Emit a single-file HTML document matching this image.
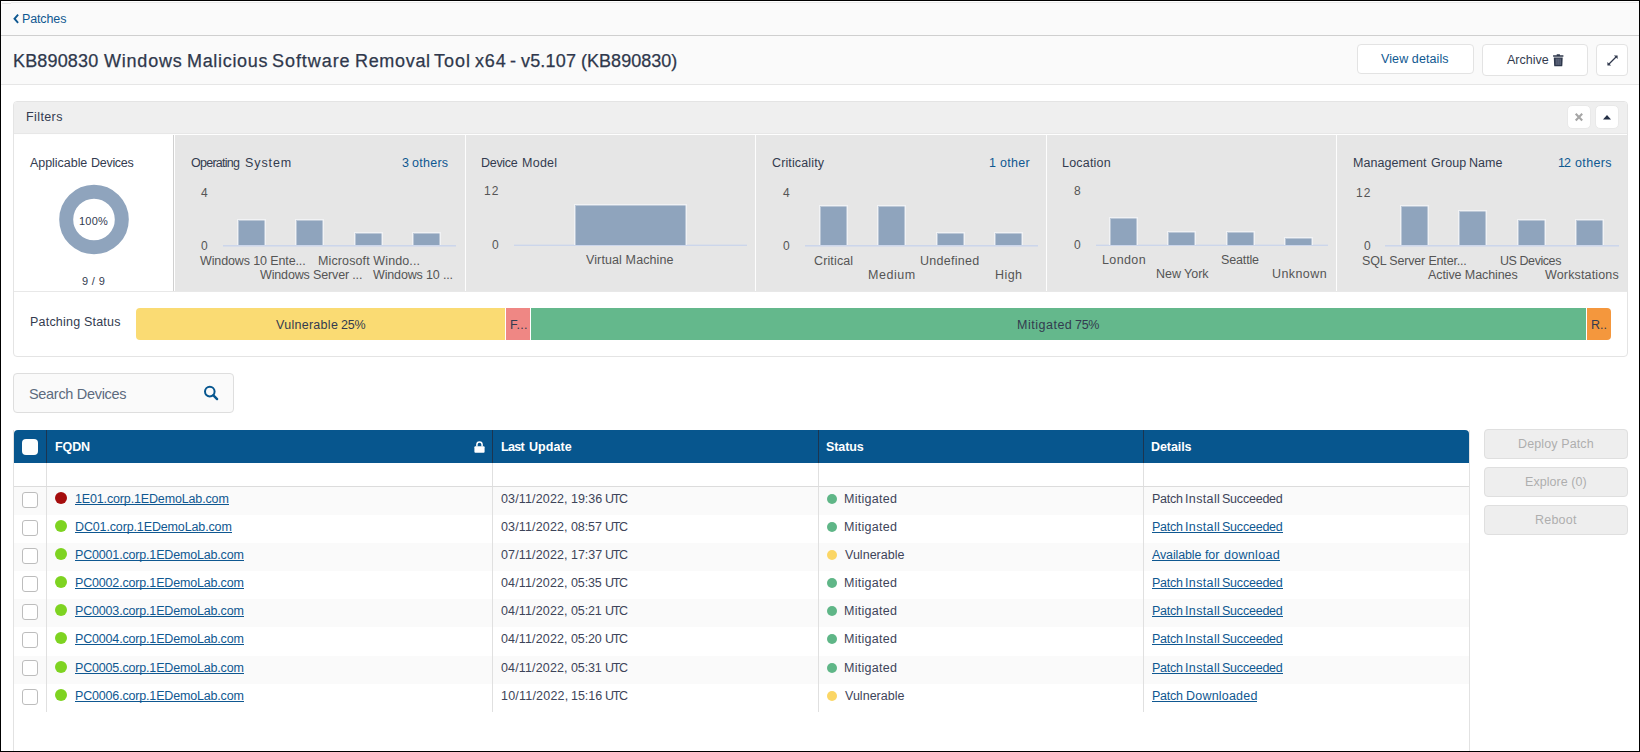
<!DOCTYPE html>
<html><head><meta charset="utf-8"><title>Patch</title>
<style>
html,body{margin:0;padding:0;}
body{width:1640px;height:752px;position:relative;overflow:hidden;background:#fff;font-family:"Liberation Sans", sans-serif;}
.r{position:absolute;display:block;}
.t{position:absolute;white-space:nowrap;line-height:20px;}
</style></head><body>
<div class="r" style="left:0px;top:0px;width:1640px;height:35px;background:#fafafa;"></div>
<div class="r" style="left:1px;top:1px;width:1638px;height:1px;background:#fff;"></div>
<div class="r" style="left:11px;top:2px;width:1628px;height:1px;background:#ececec;"></div>
<div class="r" style="left:2px;top:3px;width:9px;height:1px;background:#e6e6e6;"></div>
<div class="r" style="left:0px;top:35px;width:1640px;height:1px;background:#cfcfcf;"></div>
<div class="r" style="left:0px;top:36px;width:1640px;height:48px;background:#fafafa;"></div>
<div class="r" style="left:0px;top:84px;width:1640px;height:1px;background:#e6e6e6;"></div>
<svg class="r" style="left:12px;top:13px" width="9" height="12" viewBox="0 0 9 12"><path d="M6.1 1.7 L2.5 5.75 L6.1 9.8" fill="none" stroke="#0f5891" stroke-width="1.9"/></svg>
<span class="t" id="patches" style="left:22px;top:9px;font-size:12.5px;color:#0f5891;letter-spacing:-0.130px;">Patches</span>
<span class="t" id="title0" style="left:13px;top:51px;font-size:18px;color:#2f384c;letter-spacing:0.164px;-webkit-text-stroke:0.25px #2f384c;">KB890830</span>
<span class="t" id="title1" style="left:104px;top:51px;font-size:18px;color:#2f384c;letter-spacing:0.781px;-webkit-text-stroke:0.25px #2f384c;">Windows</span>
<span class="t" id="title2" style="left:187px;top:51px;font-size:18px;color:#2f384c;letter-spacing:0.677px;-webkit-text-stroke:0.25px #2f384c;">Malicious</span>
<span class="t" id="title3" style="left:272px;top:51px;font-size:18px;color:#2f384c;letter-spacing:0.940px;-webkit-text-stroke:0.25px #2f384c;">Software</span>
<span class="t" id="title4" style="left:355px;top:51px;font-size:18px;color:#2f384c;letter-spacing:0.674px;-webkit-text-stroke:0.25px #2f384c;">Removal</span>
<span class="t" id="title5" style="left:434px;top:51px;font-size:18px;color:#2f384c;letter-spacing:0.964px;-webkit-text-stroke:0.25px #2f384c;">Tool</span>
<span class="t" id="title6" style="left:475px;top:51px;font-size:18px;color:#2f384c;letter-spacing:0.830px;-webkit-text-stroke:0.25px #2f384c;">x64</span>
<span class="t" id="title7" style="left:510px;top:51px;font-size:18px;color:#2f384c;letter-spacing:0.000px;-webkit-text-stroke:0.25px #2f384c;">-</span>
<span class="t" id="title8" style="left:521px;top:51px;font-size:18px;color:#2f384c;letter-spacing:0.170px;-webkit-text-stroke:0.25px #2f384c;">v5.107</span>
<span class="t" id="title9" style="left:581px;top:51px;font-size:18px;color:#2f384c;letter-spacing:0.029px;-webkit-text-stroke:0.25px #2f384c;">(KB890830)</span>
<div class="r" style="left:1357px;top:44px;width:117px;height:30px;background:#fff;border:1px solid #e3e3e3;border-radius:4px;box-sizing:border-box;"></div>
<span class="t" id="viewdetails" style="left:1381px;top:49px;font-size:12.5px;color:#0f5891;letter-spacing:0.101px;">View details</span>
<div class="r" style="left:1482px;top:44px;width:106px;height:32px;background:#fff;border:1px solid #e3e3e3;border-radius:4px;box-sizing:border-box;"></div>
<span class="t" id="archive" style="left:1507px;top:50px;font-size:12.5px;color:#333b4f;letter-spacing:-0.010px;">Archive</span>
<svg class="r" style="left:1553px;top:53.5px" width="11" height="13" viewBox="0 0 11 13"><path d="M3.7 .3h3.2v1.2h-3.2z M.1 1.2h10.3v1.6H.1z M.8 3.5h8.9l-.35 7.9a.9.9 0 0 1-.9.85H2.05a.9.9 0 0 1-.9-.85z" fill="#2f384c"/><path d="M2.6 4.6h5.3v6.3H2.6z" fill="#5c657a"/><path d="M4.2 4.6v6.3M6.3 4.6v6.3" stroke="#454e63" stroke-width=".7"/></svg>
<div class="r" style="left:1596px;top:44px;width:32px;height:32px;background:#fff;border:1px solid #e3e3e3;border-radius:4px;box-sizing:border-box;"></div>
<svg class="r" style="left:1606.5px;top:54.5px" width="11" height="11" viewBox="0 0 11 11"><path d="M2 9 L9 2" stroke="#2f384c" stroke-width="1.15"/><path d="M6.9 .4h3.7v3.7z M.4 6.9v3.7h3.7z" fill="#2f384c"/></svg>
<div class="r" style="left:13px;top:101px;width:1615px;height:256px;background:#fff;border:1px solid #e4e4e4;border-radius:4px;box-sizing:border-box;"></div>
<div class="r" style="left:14px;top:102px;width:1613px;height:31px;background:#efefef;border-radius:3px 3px 0 0;"></div>
<div class="r" style="left:14px;top:133px;width:1613px;height:1px;background:#e7e7e7;"></div>
<div class="r" style="left:14px;top:134px;width:1613px;height:1px;background:#fefefe;"></div>
<span class="t" id="filters" style="left:26px;top:107px;font-size:12.5px;color:#333b4f;letter-spacing:0.396px;">Filters</span>
<div class="r" style="left:1567px;top:105px;width:24px;height:24px;background:#fff;border:1px solid #e9e9e9;border-radius:5px;box-sizing:border-box;"></div>
<svg class="r" style="left:1574px;top:112px" width="10" height="10" viewBox="0 0 10 10"><path d="M1.7 1.7 L8.2 8.4 M8.2 1.7 L1.7 8.4" stroke="#a6a6a6" stroke-width="2.1"/></svg>
<div class="r" style="left:1595px;top:105px;width:24px;height:24px;background:#fff;border:1px solid #e9e9e9;border-radius:5px;box-sizing:border-box;"></div>
<svg class="r" style="left:1602px;top:114px" width="10" height="6" viewBox="0 0 10 6"><path d="M1 5.4 L5 1 L9 5.4z" fill="#232f45"/></svg>
<div class="r" style="left:175px;top:135px;width:1452px;height:156px;background:#e6e6e6;"></div>
<div class="r" style="left:14px;top:291px;width:1613px;height:1px;background:#e8e8e8;"></div>
<div class="r" style="left:173px;top:135px;width:1px;height:156px;background:#d0d0d0;"></div>
<div class="r" style="left:465px;top:135px;width:1px;height:156px;background:#fdfdfd;"></div>
<div class="r" style="left:755px;top:135px;width:1px;height:156px;background:#fdfdfd;"></div>
<div class="r" style="left:1046px;top:135px;width:1px;height:156px;background:#fdfdfd;"></div>
<div class="r" style="left:1336px;top:135px;width:1px;height:156px;background:#fdfdfd;"></div>
<span class="t" id="appdev_0" style="left:30px;top:153px;font-size:12.5px;color:#333b4f;letter-spacing:-0.040px;">Applicable</span>
<span class="t" id="appdev_1" style="left:91px;top:153px;font-size:12.5px;color:#333b4f;letter-spacing:-0.283px;">Devices</span>
<svg class="r" style="left:59px;top:184px" width="70" height="72" viewBox="0 0 70 72"><circle cx="35" cy="35.5" r="27.8" fill="none" stroke="#8fa4bd" stroke-width="14"/></svg>
<span class="t" id="pct100" style="left:79px;top:211px;font-size:11px;color:#333b4f;letter-spacing:0.248px;">100%</span>
<span class="t" id="nine" style="left:82px;top:271px;font-size:11px;color:#333b4f;letter-spacing:0.336px;">9 / 9</span>
<span class="t" id="os_t_0" style="left:191px;top:153px;font-size:12.5px;color:#333b4f;letter-spacing:-0.741px;">Operating</span>
<span class="t" id="os_t_1" style="left:245px;top:153px;font-size:12.5px;color:#333b4f;letter-spacing:0.913px;">System</span>
<span class="t" id="os_o_0" style="left:402px;top:153px;font-size:12.5px;color:#0f5891;letter-spacing:0.000px;">3</span>
<span class="t" id="os_o_1" style="left:412px;top:153px;font-size:12.5px;color:#0f5891;letter-spacing:0.262px;">others</span>
<span class="t" id="os_ymax" style="left:201px;top:183px;font-size:12px;color:#555;letter-spacing:0.000px;">4</span>
<span class="t" id="os_y0" style="left:201px;top:236px;font-size:12px;color:#555;letter-spacing:0.000px;">0</span>
<div class="r" style="left:223px;top:245px;width:233px;height:1px;background:#ccd6eb;"></div>
<div class="r" style="left:223px;top:246px;width:233px;height:1px;background:rgba(204,214,235,.55);"></div>
<div class="r" style="left:237px;top:219px;width:29px;height:26px;background:#8fa4bd;border:1px solid #f1f2f4;border-bottom:none;box-sizing:border-box;background-clip:padding-box;box-shadow:inset 1px 1px 0 rgba(241,242,244,.45),inset -1px 0 0 rgba(241,242,244,.45);"></div>
<div class="r" style="left:295px;top:219px;width:29px;height:26px;background:#8fa4bd;border:1px solid #f1f2f4;border-bottom:none;box-sizing:border-box;background-clip:padding-box;box-shadow:inset 1px 1px 0 rgba(241,242,244,.45),inset -1px 0 0 rgba(241,242,244,.45);"></div>
<div class="r" style="left:354px;top:232px;width:29px;height:13px;background:#8fa4bd;border:1px solid #f1f2f4;border-bottom:none;box-sizing:border-box;background-clip:padding-box;box-shadow:inset 1px 1px 0 rgba(241,242,244,.45),inset -1px 0 0 rgba(241,242,244,.45);"></div>
<div class="r" style="left:412px;top:232px;width:29px;height:13px;background:#8fa4bd;border:1px solid #f1f2f4;border-bottom:none;box-sizing:border-box;background-clip:padding-box;box-shadow:inset 1px 1px 0 rgba(241,242,244,.45),inset -1px 0 0 rgba(241,242,244,.45);"></div>
<span class="t" id="os_l0" style="left:200px;top:251px;font-size:12.5px;color:#555;letter-spacing:-0.120px;">Windows 10 Ente...</span>
<span class="t" id="os_l1" style="left:318px;top:251px;font-size:12.5px;color:#555;letter-spacing:0.116px;">Microsoft Windo...</span>
<span class="t" id="os_l2" style="left:260px;top:265px;font-size:12.5px;color:#555;letter-spacing:-0.145px;">Windows Server ...</span>
<span class="t" id="os_l3" style="left:373px;top:265px;font-size:12.5px;color:#555;letter-spacing:-0.148px;">Windows 10 ...</span>
<span class="t" id="dm_t_0" style="left:481px;top:153px;font-size:12.5px;color:#333b4f;letter-spacing:-0.288px;">Device</span>
<span class="t" id="dm_t_1" style="left:522px;top:153px;font-size:12.5px;color:#333b4f;letter-spacing:0.267px;">Model</span>
<span class="t" id="dm_ymax" style="left:484px;top:181px;font-size:12px;color:#555;letter-spacing:1.062px;">12</span>
<span class="t" id="dm_y0" style="left:492px;top:235px;font-size:12px;color:#555;letter-spacing:0.000px;">0</span>
<div class="r" style="left:514px;top:245px;width:232.5px;height:1px;background:#ccd6eb;"></div>
<div class="r" style="left:514px;top:244px;width:232.5px;height:1px;background:rgba(204,214,235,.4);"></div>
<div class="r" style="left:574px;top:204px;width:113px;height:41px;background:#8fa4bd;border:1px solid #f1f2f4;border-bottom:none;box-sizing:border-box;background-clip:padding-box;box-shadow:inset 1px 1px 0 rgba(241,242,244,.45),inset -1px 0 0 rgba(241,242,244,.45);"></div>
<span class="t" id="dm_l0" style="left:586px;top:250px;font-size:12.5px;color:#555;letter-spacing:0.115px;">Virtual Machine</span>
<span class="t" id="cr_t" style="left:772px;top:153px;font-size:12.5px;color:#333b4f;letter-spacing:0.130px;">Criticality</span>
<span class="t" id="cr_o" style="left:989px;top:153px;font-size:12.5px;color:#0f5891;letter-spacing:0.281px;">1 other</span>
<span class="t" id="cr_ymax" style="left:783px;top:183px;font-size:12px;color:#555;letter-spacing:0.000px;">4</span>
<span class="t" id="cr_y0" style="left:783px;top:236px;font-size:12px;color:#555;letter-spacing:0.000px;">0</span>
<div class="r" style="left:804.5px;top:245px;width:233.5px;height:1px;background:#ccd6eb;"></div>
<div class="r" style="left:804.5px;top:246px;width:233.5px;height:1px;background:rgba(204,214,235,.55);"></div>
<div class="r" style="left:819px;top:205px;width:29px;height:40px;background:#8fa4bd;border:1px solid #f1f2f4;border-bottom:none;box-sizing:border-box;background-clip:padding-box;box-shadow:inset 1px 1px 0 rgba(241,242,244,.45),inset -1px 0 0 rgba(241,242,244,.45);"></div>
<div class="r" style="left:877px;top:205px;width:29px;height:40px;background:#8fa4bd;border:1px solid #f1f2f4;border-bottom:none;box-sizing:border-box;background-clip:padding-box;box-shadow:inset 1px 1px 0 rgba(241,242,244,.45),inset -1px 0 0 rgba(241,242,244,.45);"></div>
<div class="r" style="left:936px;top:232px;width:29px;height:13px;background:#8fa4bd;border:1px solid #f1f2f4;border-bottom:none;box-sizing:border-box;background-clip:padding-box;box-shadow:inset 1px 1px 0 rgba(241,242,244,.45),inset -1px 0 0 rgba(241,242,244,.45);"></div>
<div class="r" style="left:994px;top:232px;width:29px;height:13px;background:#8fa4bd;border:1px solid #f1f2f4;border-bottom:none;box-sizing:border-box;background-clip:padding-box;box-shadow:inset 1px 1px 0 rgba(241,242,244,.45),inset -1px 0 0 rgba(241,242,244,.45);"></div>
<span class="t" id="cr_l0" style="left:814px;top:251px;font-size:12.5px;color:#555;letter-spacing:0.136px;">Critical</span>
<span class="t" id="cr_l1" style="left:920px;top:251px;font-size:12.5px;color:#555;letter-spacing:0.277px;">Undefined</span>
<span class="t" id="cr_l2" style="left:868px;top:265px;font-size:12.5px;color:#555;letter-spacing:0.536px;">Medium</span>
<span class="t" id="cr_l3" style="left:995px;top:265px;font-size:12.5px;color:#555;letter-spacing:0.433px;">High</span>
<span class="t" id="lo_t" style="left:1062px;top:153px;font-size:12.5px;color:#333b4f;letter-spacing:0.196px;">Location</span>
<span class="t" id="lo_ymax" style="left:1074px;top:181px;font-size:12px;color:#555;letter-spacing:0.000px;">8</span>
<span class="t" id="lo_y0" style="left:1074px;top:235px;font-size:12px;color:#555;letter-spacing:0.000px;">0</span>
<div class="r" style="left:1095.5px;top:245px;width:232.0px;height:1px;background:#ccd6eb;"></div>
<div class="r" style="left:1095.5px;top:244px;width:232.0px;height:1px;background:rgba(204,214,235,.4);"></div>
<div class="r" style="left:1109px;top:217px;width:29px;height:28px;background:#8fa4bd;border:1px solid #f1f2f4;border-bottom:none;box-sizing:border-box;background-clip:padding-box;box-shadow:inset 1px 1px 0 rgba(241,242,244,.45),inset -1px 0 0 rgba(241,242,244,.45);"></div>
<div class="r" style="left:1167px;top:231px;width:29px;height:14px;background:#8fa4bd;border:1px solid #f1f2f4;border-bottom:none;box-sizing:border-box;background-clip:padding-box;box-shadow:inset 1px 1px 0 rgba(241,242,244,.45),inset -1px 0 0 rgba(241,242,244,.45);"></div>
<div class="r" style="left:1226px;top:231px;width:29px;height:14px;background:#8fa4bd;border:1px solid #f1f2f4;border-bottom:none;box-sizing:border-box;background-clip:padding-box;box-shadow:inset 1px 1px 0 rgba(241,242,244,.45),inset -1px 0 0 rgba(241,242,244,.45);"></div>
<div class="r" style="left:1284px;top:237px;width:29px;height:8px;background:#8fa4bd;border:1px solid #f1f2f4;border-bottom:none;box-sizing:border-box;background-clip:padding-box;box-shadow:inset 1px 1px 0 rgba(241,242,244,.45),inset -1px 0 0 rgba(241,242,244,.45);"></div>
<span class="t" id="lo_l0" style="left:1102px;top:250px;font-size:12.5px;color:#555;letter-spacing:0.384px;">London</span>
<span class="t" id="lo_l1" style="left:1221px;top:250px;font-size:12.5px;color:#555;letter-spacing:-0.147px;">Seattle</span>
<span class="t" id="lo_l2" style="left:1156px;top:264px;font-size:12.5px;color:#555;letter-spacing:-0.038px;">New York</span>
<span class="t" id="lo_l3" style="left:1272px;top:264px;font-size:12.5px;color:#555;letter-spacing:0.418px;">Unknown</span>
<span class="t" id="mg_t_0" style="left:1353px;top:153px;font-size:12.5px;color:#333b4f;letter-spacing:0.068px;">Management</span>
<span class="t" id="mg_t_1" style="left:1431px;top:153px;font-size:12.5px;color:#333b4f;letter-spacing:0.120px;">Group</span>
<span class="t" id="mg_t_2" style="left:1469px;top:153px;font-size:12.5px;color:#333b4f;letter-spacing:0.052px;">Name</span>
<span class="t" id="mg_o_0" style="left:1558px;top:153px;font-size:12.5px;color:#0f5891;letter-spacing:-0.828px;">12</span>
<span class="t" id="mg_o_1" style="left:1575px;top:153px;font-size:12.5px;color:#0f5891;letter-spacing:0.360px;">others</span>
<span class="t" id="mg_ymax" style="left:1356px;top:183px;font-size:12px;color:#555;letter-spacing:1.062px;">12</span>
<span class="t" id="mg_y0" style="left:1364px;top:236px;font-size:12px;color:#555;letter-spacing:0.000px;">0</span>
<div class="r" style="left:1385px;top:245px;width:234px;height:1px;background:#ccd6eb;"></div>
<div class="r" style="left:1385px;top:246px;width:234px;height:1px;background:rgba(204,214,235,.55);"></div>
<div class="r" style="left:1400px;top:205px;width:29px;height:40px;background:#8fa4bd;border:1px solid #f1f2f4;border-bottom:none;box-sizing:border-box;background-clip:padding-box;box-shadow:inset 1px 1px 0 rgba(241,242,244,.45),inset -1px 0 0 rgba(241,242,244,.45);"></div>
<div class="r" style="left:1458px;top:210px;width:29px;height:35px;background:#8fa4bd;border:1px solid #f1f2f4;border-bottom:none;box-sizing:border-box;background-clip:padding-box;box-shadow:inset 1px 1px 0 rgba(241,242,244,.45),inset -1px 0 0 rgba(241,242,244,.45);"></div>
<div class="r" style="left:1517px;top:219px;width:29px;height:26px;background:#8fa4bd;border:1px solid #f1f2f4;border-bottom:none;box-sizing:border-box;background-clip:padding-box;box-shadow:inset 1px 1px 0 rgba(241,242,244,.45),inset -1px 0 0 rgba(241,242,244,.45);"></div>
<div class="r" style="left:1575px;top:219px;width:29px;height:26px;background:#8fa4bd;border:1px solid #f1f2f4;border-bottom:none;box-sizing:border-box;background-clip:padding-box;box-shadow:inset 1px 1px 0 rgba(241,242,244,.45),inset -1px 0 0 rgba(241,242,244,.45);"></div>
<span class="t" id="mg_l0" style="left:1362px;top:251px;font-size:12.5px;color:#555;letter-spacing:-0.174px;">SQL Server Enter...</span>
<span class="t" id="mg_l1" style="left:1500px;top:251px;font-size:12.5px;color:#555;letter-spacing:-0.435px;">US Devices</span>
<span class="t" id="mg_l2" style="left:1428px;top:265px;font-size:12.5px;color:#555;letter-spacing:-0.098px;">Active Machines</span>
<span class="t" id="mg_l3" style="left:1545px;top:265px;font-size:12.5px;color:#555;letter-spacing:0.149px;">Workstations</span>
<span class="t" id="patching" style="left:30px;top:312px;font-size:12.5px;color:#333b4f;letter-spacing:0.205px;">Patching Status</span>
<div class="r" style="left:136px;top:308px;width:369px;height:32px;background:#fadb73;border-radius:4px 0 0 4px;"></div>
<div class="r" style="left:506px;top:308px;width:24px;height:32px;background:#ef8784;"></div>
<div class="r" style="left:531px;top:308px;width:1055px;height:32px;background:#64b88c;"></div>
<div class="r" style="left:1587px;top:308px;width:24px;height:32px;background:#f4973d;border-radius:0 4px 4px 0;"></div>
<span class="t" id="vuln25_0" style="left:276px;top:315px;font-size:12.5px;color:#333b4f;letter-spacing:0.282px;">Vulnerable</span>
<span class="t" id="vuln25_1" style="left:341px;top:315px;font-size:12.5px;color:#333b4f;letter-spacing:-0.244px;">25%</span>
<span class="t" id="fdots" style="left:510px;top:315px;font-size:12.5px;color:#333b4f;letter-spacing:0.257px;">F...</span>
<span class="t" id="mit75_0" style="left:1017px;top:315px;font-size:12.5px;color:#333b4f;letter-spacing:0.512px;">Mitigated</span>
<span class="t" id="mit75_1" style="left:1075px;top:315px;font-size:12.5px;color:#333b4f;letter-spacing:-0.280px;">75%</span>
<span class="t" id="rdots" style="left:1591px;top:315px;font-size:12.5px;color:#333b4f;letter-spacing:0.000px;">R..</span>
<div class="r" style="left:13px;top:373px;width:221px;height:40px;background:#fafafa;border:1px solid #dedede;border-radius:4px;box-sizing:border-box;"></div>
<span class="t" id="search" style="left:29px;top:384px;font-size:14.5px;color:#5d6b7e;letter-spacing:-0.313px;">Search Devices</span>
<svg class="r" style="left:203px;top:385px" width="16" height="16" viewBox="0 0 16 16"><circle cx="6.8" cy="6.6" r="4.8" fill="none" stroke="#06568f" stroke-width="2"/><path d="M10.4 10.3 L14.1 14.1" stroke="#06568f" stroke-width="2.4" stroke-linecap="round"/></svg>
<div class="r" style="left:13px;top:430px;width:1px;height:321px;background:#e2e2e2;"></div>
<div class="r" style="left:1469px;top:430px;width:1px;height:321px;background:#e2e2e2;"></div>
<div class="r" style="left:14px;top:430px;width:1455px;height:33px;background:#07568e;border-radius:4px 4px 0 0;"></div>
<div class="r" style="left:46px;top:430px;width:1px;height:33px;background:#1c3550;"></div>
<div class="r" style="left:46px;top:463px;width:1px;height:249px;background:#e0e0e0;"></div>
<div class="r" style="left:492px;top:430px;width:1px;height:33px;background:#1c3550;"></div>
<div class="r" style="left:492px;top:463px;width:1px;height:249px;background:#e0e0e0;"></div>
<div class="r" style="left:818px;top:430px;width:1px;height:33px;background:#1c3550;"></div>
<div class="r" style="left:818px;top:463px;width:1px;height:249px;background:#e0e0e0;"></div>
<div class="r" style="left:1143px;top:430px;width:1px;height:33px;background:#1c3550;"></div>
<div class="r" style="left:1143px;top:463px;width:1px;height:249px;background:#e0e0e0;"></div>
<div class="r" style="left:22px;top:439px;width:16px;height:16px;background:#fefefd;border-radius:4px;"></div>
<span class="t" id="fqdn" style="left:55px;top:437px;font-size:12.5px;color:#fff;letter-spacing:-0.114px;font-weight:700;">FQDN</span>
<span class="t" id="lastupdate_0" style="left:501px;top:437px;font-size:12.5px;color:#fff;letter-spacing:-0.656px;font-weight:700;">Last</span>
<span class="t" id="lastupdate_1" style="left:529px;top:437px;font-size:12.5px;color:#fff;letter-spacing:0.050px;font-weight:700;">Update</span>
<span class="t" id="status" style="left:826px;top:437px;font-size:12.5px;color:#fff;letter-spacing:-0.102px;font-weight:700;">Status</span>
<span class="t" id="details" style="left:1151px;top:437px;font-size:12.5px;color:#fff;letter-spacing:-0.078px;font-weight:700;">Details</span>
<svg class="r" style="left:474px;top:441px" width="11" height="12" viewBox="0 0 11 12"><path d="M2.9 5.4V3.6a2.6 2.6 0 0 1 5.2 0v1.8" fill="none" stroke="#fff" stroke-width="1.5"/><rect x=".4" y="5.2" width="10.2" height="6.6" rx="1" fill="#fff"/></svg>
<div class="r" style="left:14px;top:486px;width:1455px;height:1px;background:#dcdcdc;"></div>
<div class="r" style="left:14px;top:487px;width:32px;height:28px;background:#fafafa;"></div>
<div class="r" style="left:47px;top:487px;width:445px;height:28px;background:#fafafa;"></div>
<div class="r" style="left:493px;top:487px;width:325px;height:28px;background:#fafafa;"></div>
<div class="r" style="left:819px;top:487px;width:324px;height:28px;background:#fafafa;"></div>
<div class="r" style="left:1144px;top:487px;width:325px;height:28px;background:#fafafa;"></div>
<div class="r" style="left:22px;top:492px;width:16px;height:16px;background:#fff;border:1px solid #bdbdbd;border-radius:3px;box-sizing:border-box;"></div>
<div class="r" style="left:55px;top:492px;width:12px;height:12px;background:#a50d0d;border-radius:50%;"></div>
<span class="t" id="fq0_0" style="left:75px;top:489px;font-size:12.5px;color:#0f5891;letter-spacing:-0.146px;">1E01.corp.1EDemoLab.com</span>
<div class="r" style="left:75px;top:504px;width:154px;height:1px;background:#0f5891;"></div>
<span class="t" id="dta0" style="left:501px;top:489px;font-size:12.5px;color:#3d4459;letter-spacing:0.148px;">03/11/2022,</span>
<span class="t" id="dtb0" style="left:571px;top:489px;font-size:12.5px;color:#3d4459;letter-spacing:-0.033px;">19:36</span>
<span class="t" id="dtc0" style="left:605px;top:489px;font-size:12.5px;color:#3d4459;letter-spacing:-1.332px;">UTC</span>
<div class="r" style="left:827px;top:494.0px;width:10px;height:10px;background:#5fb687;border-radius:50%;"></div>
<span class="t" id="st0" style="left:844px;top:489px;font-size:12.5px;color:#3d4459;letter-spacing:0.280px;">Mitigated</span>
<span class="t" id="de0_0" style="left:1152px;top:489px;font-size:12.5px;color:#3d4459;letter-spacing:-0.238px;">Patch</span>
<span class="t" id="de0_1" style="left:1185px;top:489px;font-size:12.5px;color:#3d4459;letter-spacing:0.368px;">Install</span>
<span class="t" id="de0_2" style="left:1222px;top:489px;font-size:12.5px;color:#3d4459;letter-spacing:-0.219px;">Succeeded</span>
<div class="r" style="left:22px;top:520px;width:16px;height:16px;background:#fff;border:1px solid #bdbdbd;border-radius:3px;box-sizing:border-box;"></div>
<div class="r" style="left:55px;top:520px;width:12px;height:12px;background:#7ed321;border-radius:50%;"></div>
<span class="t" id="fq1_0" style="left:75px;top:517px;font-size:12.5px;color:#0f5891;letter-spacing:-0.136px;">DC01.corp.1EDemoLab.com</span>
<div class="r" style="left:75px;top:532px;width:157px;height:1px;background:#0f5891;"></div>
<span class="t" id="dta1" style="left:501px;top:517px;font-size:12.5px;color:#3d4459;letter-spacing:0.148px;">03/11/2022,</span>
<span class="t" id="dtb1" style="left:571px;top:517px;font-size:12.5px;color:#3d4459;letter-spacing:-0.095px;">08:57</span>
<span class="t" id="dtc1" style="left:605px;top:517px;font-size:12.5px;color:#3d4459;letter-spacing:-1.332px;">UTC</span>
<div class="r" style="left:827px;top:522.0px;width:10px;height:10px;background:#5fb687;border-radius:50%;"></div>
<span class="t" id="st1" style="left:844px;top:517px;font-size:12.5px;color:#3d4459;letter-spacing:0.280px;">Mitigated</span>
<span class="t" id="de1_0" style="left:1152px;top:517px;font-size:12.5px;color:#0f5891;letter-spacing:-0.238px;">Patch</span>
<span class="t" id="de1_1" style="left:1185px;top:517px;font-size:12.5px;color:#0f5891;letter-spacing:0.368px;">Install</span>
<span class="t" id="de1_2" style="left:1222px;top:517px;font-size:12.5px;color:#0f5891;letter-spacing:-0.219px;">Succeeded</span>
<div class="r" style="left:1152px;top:532px;width:131px;height:1px;background:#0f5891;"></div>
<div class="r" style="left:14px;top:543px;width:32px;height:28px;background:#fafafa;"></div>
<div class="r" style="left:47px;top:543px;width:445px;height:28px;background:#fafafa;"></div>
<div class="r" style="left:493px;top:543px;width:325px;height:28px;background:#fafafa;"></div>
<div class="r" style="left:819px;top:543px;width:324px;height:28px;background:#fafafa;"></div>
<div class="r" style="left:1144px;top:543px;width:325px;height:28px;background:#fafafa;"></div>
<div class="r" style="left:22px;top:548px;width:16px;height:16px;background:#fff;border:1px solid #bdbdbd;border-radius:3px;box-sizing:border-box;"></div>
<div class="r" style="left:55px;top:548px;width:12px;height:12px;background:#7ed321;border-radius:50%;"></div>
<span class="t" id="fq2_0" style="left:75px;top:545px;font-size:12.5px;color:#0f5891;letter-spacing:-0.172px;">PC0001.corp.1EDemoLab.com</span>
<div class="r" style="left:75px;top:560px;width:169px;height:1px;background:#0f5891;"></div>
<span class="t" id="dta2" style="left:501px;top:545px;font-size:12.5px;color:#3d4459;letter-spacing:0.148px;">07/11/2022,</span>
<span class="t" id="dtb2" style="left:571px;top:545px;font-size:12.5px;color:#3d4459;letter-spacing:-0.045px;">17:37</span>
<span class="t" id="dtc2" style="left:605px;top:545px;font-size:12.5px;color:#3d4459;letter-spacing:-1.332px;">UTC</span>
<div class="r" style="left:827px;top:550.0px;width:10px;height:10px;background:#fbd665;border-radius:50%;"></div>
<span class="t" id="st2" style="left:845px;top:545px;font-size:12.5px;color:#3d4459;letter-spacing:0.018px;">Vulnerable</span>
<span class="t" id="de2_0" style="left:1152px;top:545px;font-size:12.5px;color:#0f5891;letter-spacing:-0.131px;">Available</span>
<span class="t" id="de2_1" style="left:1205px;top:545px;font-size:12.5px;color:#0f5891;letter-spacing:-0.118px;">for</span>
<span class="t" id="de2_2" style="left:1224px;top:545px;font-size:12.5px;color:#0f5891;letter-spacing:0.301px;">download</span>
<div class="r" style="left:1152px;top:560px;width:128px;height:1px;background:#0f5891;"></div>
<div class="r" style="left:22px;top:576px;width:16px;height:16px;background:#fff;border:1px solid #bdbdbd;border-radius:3px;box-sizing:border-box;"></div>
<div class="r" style="left:55px;top:576px;width:12px;height:12px;background:#7ed321;border-radius:50%;"></div>
<span class="t" id="fq3_0" style="left:75px;top:573px;font-size:12.5px;color:#0f5891;letter-spacing:-0.172px;">PC0002.corp.1EDemoLab.com</span>
<div class="r" style="left:75px;top:588px;width:169px;height:1px;background:#0f5891;"></div>
<span class="t" id="dta3" style="left:501px;top:573px;font-size:12.5px;color:#3d4459;letter-spacing:0.148px;">04/11/2022,</span>
<span class="t" id="dtb3" style="left:571px;top:573px;font-size:12.5px;color:#3d4459;letter-spacing:-0.116px;">05:35</span>
<span class="t" id="dtc3" style="left:605px;top:573px;font-size:12.5px;color:#3d4459;letter-spacing:-1.332px;">UTC</span>
<div class="r" style="left:827px;top:578.0px;width:10px;height:10px;background:#5fb687;border-radius:50%;"></div>
<span class="t" id="st3" style="left:844px;top:573px;font-size:12.5px;color:#3d4459;letter-spacing:0.280px;">Mitigated</span>
<span class="t" id="de3_0" style="left:1152px;top:573px;font-size:12.5px;color:#0f5891;letter-spacing:-0.238px;">Patch</span>
<span class="t" id="de3_1" style="left:1185px;top:573px;font-size:12.5px;color:#0f5891;letter-spacing:0.368px;">Install</span>
<span class="t" id="de3_2" style="left:1222px;top:573px;font-size:12.5px;color:#0f5891;letter-spacing:-0.219px;">Succeeded</span>
<div class="r" style="left:1152px;top:588px;width:131px;height:1px;background:#0f5891;"></div>
<div class="r" style="left:14px;top:599px;width:32px;height:28px;background:#fafafa;"></div>
<div class="r" style="left:47px;top:599px;width:445px;height:28px;background:#fafafa;"></div>
<div class="r" style="left:493px;top:599px;width:325px;height:28px;background:#fafafa;"></div>
<div class="r" style="left:819px;top:599px;width:324px;height:28px;background:#fafafa;"></div>
<div class="r" style="left:1144px;top:599px;width:325px;height:28px;background:#fafafa;"></div>
<div class="r" style="left:22px;top:604px;width:16px;height:16px;background:#fff;border:1px solid #bdbdbd;border-radius:3px;box-sizing:border-box;"></div>
<div class="r" style="left:55px;top:604px;width:12px;height:12px;background:#7ed321;border-radius:50%;"></div>
<span class="t" id="fq4_0" style="left:75px;top:601px;font-size:12.5px;color:#0f5891;letter-spacing:-0.172px;">PC0003.corp.1EDemoLab.com</span>
<div class="r" style="left:75px;top:616px;width:169px;height:1px;background:#0f5891;"></div>
<span class="t" id="dta4" style="left:501px;top:601px;font-size:12.5px;color:#3d4459;letter-spacing:0.148px;">04/11/2022,</span>
<span class="t" id="dtb4" style="left:571px;top:601px;font-size:12.5px;color:#3d4459;letter-spacing:-0.119px;">05:21</span>
<span class="t" id="dtc4" style="left:605px;top:601px;font-size:12.5px;color:#3d4459;letter-spacing:-1.332px;">UTC</span>
<div class="r" style="left:827px;top:606.0px;width:10px;height:10px;background:#5fb687;border-radius:50%;"></div>
<span class="t" id="st4" style="left:844px;top:601px;font-size:12.5px;color:#3d4459;letter-spacing:0.280px;">Mitigated</span>
<span class="t" id="de4_0" style="left:1152px;top:601px;font-size:12.5px;color:#0f5891;letter-spacing:-0.238px;">Patch</span>
<span class="t" id="de4_1" style="left:1185px;top:601px;font-size:12.5px;color:#0f5891;letter-spacing:0.368px;">Install</span>
<span class="t" id="de4_2" style="left:1222px;top:601px;font-size:12.5px;color:#0f5891;letter-spacing:-0.219px;">Succeeded</span>
<div class="r" style="left:1152px;top:616px;width:131px;height:1px;background:#0f5891;"></div>
<div class="r" style="left:22px;top:632px;width:16px;height:16px;background:#fff;border:1px solid #bdbdbd;border-radius:3px;box-sizing:border-box;"></div>
<div class="r" style="left:55px;top:632px;width:12px;height:12px;background:#7ed321;border-radius:50%;"></div>
<span class="t" id="fq5_0" style="left:75px;top:629px;font-size:12.5px;color:#0f5891;letter-spacing:-0.172px;">PC0004.corp.1EDemoLab.com</span>
<div class="r" style="left:75px;top:644px;width:169px;height:1px;background:#0f5891;"></div>
<span class="t" id="dta5" style="left:501px;top:629px;font-size:12.5px;color:#3d4459;letter-spacing:0.148px;">04/11/2022,</span>
<span class="t" id="dtb5" style="left:571px;top:629px;font-size:12.5px;color:#3d4459;letter-spacing:-0.131px;">05:20</span>
<span class="t" id="dtc5" style="left:605px;top:629px;font-size:12.5px;color:#3d4459;letter-spacing:-1.332px;">UTC</span>
<div class="r" style="left:827px;top:634.0px;width:10px;height:10px;background:#5fb687;border-radius:50%;"></div>
<span class="t" id="st5" style="left:844px;top:629px;font-size:12.5px;color:#3d4459;letter-spacing:0.280px;">Mitigated</span>
<span class="t" id="de5_0" style="left:1152px;top:629px;font-size:12.5px;color:#0f5891;letter-spacing:-0.238px;">Patch</span>
<span class="t" id="de5_1" style="left:1185px;top:629px;font-size:12.5px;color:#0f5891;letter-spacing:0.368px;">Install</span>
<span class="t" id="de5_2" style="left:1222px;top:629px;font-size:12.5px;color:#0f5891;letter-spacing:-0.219px;">Succeeded</span>
<div class="r" style="left:1152px;top:644px;width:131px;height:1px;background:#0f5891;"></div>
<div class="r" style="left:14px;top:656px;width:32px;height:28px;background:#fafafa;"></div>
<div class="r" style="left:47px;top:656px;width:445px;height:28px;background:#fafafa;"></div>
<div class="r" style="left:493px;top:656px;width:325px;height:28px;background:#fafafa;"></div>
<div class="r" style="left:819px;top:656px;width:324px;height:28px;background:#fafafa;"></div>
<div class="r" style="left:1144px;top:656px;width:325px;height:28px;background:#fafafa;"></div>
<div class="r" style="left:22px;top:660px;width:16px;height:16px;background:#fff;border:1px solid #bdbdbd;border-radius:3px;box-sizing:border-box;"></div>
<div class="r" style="left:55px;top:661px;width:12px;height:12px;background:#7ed321;border-radius:50%;"></div>
<span class="t" id="fq6_0" style="left:75px;top:658px;font-size:12.5px;color:#0f5891;letter-spacing:-0.172px;">PC0005.corp.1EDemoLab.com</span>
<div class="r" style="left:75px;top:673px;width:169px;height:1px;background:#0f5891;"></div>
<span class="t" id="dta6" style="left:501px;top:658px;font-size:12.5px;color:#3d4459;letter-spacing:0.148px;">04/11/2022,</span>
<span class="t" id="dtb6" style="left:571px;top:658px;font-size:12.5px;color:#3d4459;letter-spacing:-0.119px;">05:31</span>
<span class="t" id="dtc6" style="left:605px;top:658px;font-size:12.5px;color:#3d4459;letter-spacing:-1.332px;">UTC</span>
<div class="r" style="left:827px;top:663.0px;width:10px;height:10px;background:#5fb687;border-radius:50%;"></div>
<span class="t" id="st6" style="left:844px;top:658px;font-size:12.5px;color:#3d4459;letter-spacing:0.280px;">Mitigated</span>
<span class="t" id="de6_0" style="left:1152px;top:658px;font-size:12.5px;color:#0f5891;letter-spacing:-0.238px;">Patch</span>
<span class="t" id="de6_1" style="left:1185px;top:658px;font-size:12.5px;color:#0f5891;letter-spacing:0.368px;">Install</span>
<span class="t" id="de6_2" style="left:1222px;top:658px;font-size:12.5px;color:#0f5891;letter-spacing:-0.219px;">Succeeded</span>
<div class="r" style="left:1152px;top:673px;width:131px;height:1px;background:#0f5891;"></div>
<div class="r" style="left:22px;top:689px;width:16px;height:16px;background:#fff;border:1px solid #bdbdbd;border-radius:3px;box-sizing:border-box;"></div>
<div class="r" style="left:55px;top:689px;width:12px;height:12px;background:#7ed321;border-radius:50%;"></div>
<span class="t" id="fq7_0" style="left:75px;top:686px;font-size:12.5px;color:#0f5891;letter-spacing:-0.172px;">PC0006.corp.1EDemoLab.com</span>
<div class="r" style="left:75px;top:701px;width:169px;height:1px;background:#0f5891;"></div>
<span class="t" id="dta7" style="left:501px;top:686px;font-size:12.5px;color:#3d4459;letter-spacing:0.210px;">10/11/2022,</span>
<span class="t" id="dtb7" style="left:571px;top:686px;font-size:12.5px;color:#3d4459;letter-spacing:-0.033px;">15:16</span>
<span class="t" id="dtc7" style="left:605px;top:686px;font-size:12.5px;color:#3d4459;letter-spacing:-1.332px;">UTC</span>
<div class="r" style="left:827px;top:691.0px;width:10px;height:10px;background:#fbd665;border-radius:50%;"></div>
<span class="t" id="st7" style="left:845px;top:686px;font-size:12.5px;color:#3d4459;letter-spacing:0.018px;">Vulnerable</span>
<span class="t" id="de7_0" style="left:1152px;top:686px;font-size:12.5px;color:#0f5891;letter-spacing:-0.238px;">Patch</span>
<span class="t" id="de7_1" style="left:1186px;top:686px;font-size:12.5px;color:#0f5891;letter-spacing:0.208px;">Downloaded</span>
<div class="r" style="left:1152px;top:701px;width:105px;height:1px;background:#0f5891;"></div>
<div class="r" style="left:1484px;top:429px;width:144px;height:30px;background:#eeeeee;border:1px solid #dfdfdf;border-radius:4px;box-sizing:border-box;"></div>
<span class="t" id="btn0" style="left:1518px;top:434px;font-size:12.5px;color:#aeaeae;letter-spacing:0.115px;">Deploy Patch</span>
<div class="r" style="left:1484px;top:467px;width:144px;height:30px;background:#eeeeee;border:1px solid #dfdfdf;border-radius:4px;box-sizing:border-box;"></div>
<span class="t" id="btn1" style="left:1525px;top:472px;font-size:12.5px;color:#aeaeae;letter-spacing:0.057px;">Explore (0)</span>
<div class="r" style="left:1484px;top:505px;width:144px;height:30px;background:#eeeeee;border:1px solid #dfdfdf;border-radius:4px;box-sizing:border-box;"></div>
<span class="t" id="btn2" style="left:1535px;top:510px;font-size:12.5px;color:#aeaeae;letter-spacing:0.228px;">Reboot</span>
<div class="r" style="left:0;top:0;width:1640px;height:752px;box-sizing:border-box;border:1px solid #000;border-top-width:1px;"></div>
</body></html>
